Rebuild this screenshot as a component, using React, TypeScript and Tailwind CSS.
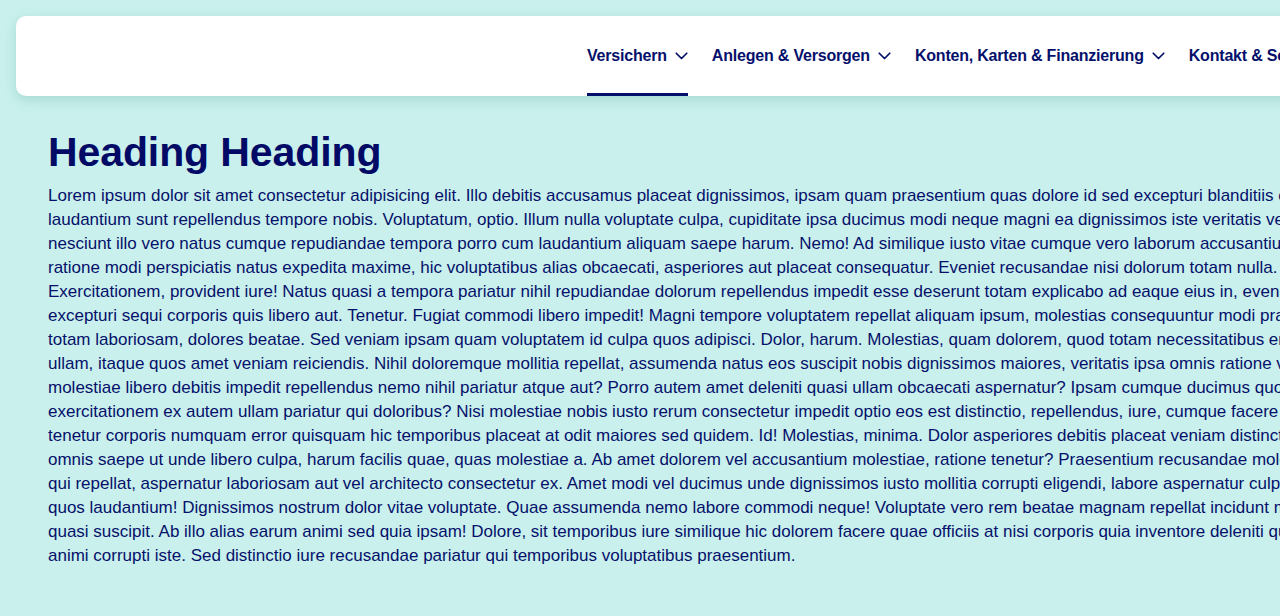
const navItems = [
  { label: 'Versichern', chevron: true, active: true },
  { label: 'Anlegen & Versorgen', chevron: true },
  { label: 'Konten, Karten & Finanzierung', chevron: true },
  { label: 'Kontakt & Service', chevron: true },
]

const lines = [
  'Lorem ipsum dolor sit amet consectetur adipisicing elit. Illo debitis accusamus placeat dignissimos, ipsam quam praesentium quas dolore id sed excepturi blanditiis cum',
  'laudantium sunt repellendus tempore nobis. Voluptatum, optio. Illum nulla voluptate culpa, cupiditate ipsa ducimus modi neque magni ea dignissimos iste veritatis vel',
  'nesciunt illo vero natus cumque repudiandae tempora porro cum laudantium aliquam saepe harum. Nemo! Ad similique iusto vitae cumque vero laborum accusantium',
  'ratione modi perspiciatis natus expedita maxime, hic voluptatibus alias obcaecati, asperiores aut placeat consequatur. Eveniet recusandae nisi dolorum totam nulla. Quo',
  'Exercitationem, provident iure! Natus quasi a tempora pariatur nihil repudiandae dolorum repellendus impedit esse deserunt totam explicabo ad eaque eius in, eveniet',
  'excepturi sequi corporis quis libero aut. Tenetur. Fugiat commodi libero impedit! Magni tempore voluptatem repellat aliquam ipsum, molestias consequuntur modi praesentium',
  'totam laboriosam, dolores beatae. Sed veniam ipsam quam voluptatem id culpa quos adipisci. Dolor, harum. Molestias, quam dolorem, quod totam necessitatibus enim',
  'ullam, itaque quos amet veniam reiciendis. Nihil doloremque mollitia repellat, assumenda natus eos suscipit nobis dignissimos maiores, veritatis ipsa omnis ratione vero',
  'molestiae libero debitis impedit repellendus nemo nihil pariatur atque aut? Porro autem amet deleniti quasi ullam obcaecati aspernatur? Ipsam cumque ducimus quod',
  'exercitationem ex autem ullam pariatur qui doloribus? Nisi molestiae nobis iusto rerum consectetur impedit optio eos est distinctio, repellendus, iure, cumque facere sint',
  'tenetur corporis numquam error quisquam hic temporibus placeat at odit maiores sed quidem. Id! Molestias, minima. Dolor asperiores debitis placeat veniam distinctio',
  'omnis saepe ut unde libero culpa, harum facilis quae, quas molestiae a. Ab amet dolorem vel accusantium molestiae, ratione tenetur? Praesentium recusandae molestias',
  'qui repellat, aspernatur laboriosam aut vel architecto consectetur ex. Amet modi vel ducimus unde dignissimos iusto mollitia corrupti eligendi, labore aspernatur culpa',
  'quos laudantium! Dignissimos nostrum dolor vitae voluptate. Quae assumenda nemo labore commodi neque! Voluptate vero rem beatae magnam repellat incidunt magni',
  'quasi suscipit. Ab illo alias earum animi sed quia ipsam! Dolore, sit temporibus iure similique hic dolorem facere quae officiis at nisi corporis quia inventore deleniti quod',
  'animi corrupti iste. Sed distinctio iure recusandae pariatur qui temporibus voluptatibus praesentium.',
]

function Chevron() {
  return (
    <svg width="13" height="8" viewBox="0 0 13 8" fill="none" className="shrink-0">
      <path d="M1.25 1.25 6.5 6.5l5.25-5.25" stroke="currentColor" strokeWidth="1.75" strokeLinecap="round" strokeLinejoin="round" />
    </svg>
  )
}

export default function App() {
  return (
    <div className="w-[1280px] h-[616px] overflow-hidden bg-[#c9f0ec] text-[#05106b] font-['Liberation_Sans',Arial,sans-serif]">
      <header className="ml-4 mt-4 w-[1500px] h-20 bg-white rounded-l-[10px] shadow-[0_4px_12px_rgba(60,150,140,0.25)] flex items-stretch">
        <nav className="ml-[571px] flex items-stretch gap-6">
          {navItems.map((item) => (
            <a
              key={item.label}
              href="#"
              className={`flex items-center gap-2 text-[16px] font-bold tracking-[-0.2px] border-b-[3px] pt-[3px] ${
                item.active ? 'border-[#05106b]' : 'border-transparent'
              }`}
            >
              <span>{item.label}</span>
              {item.chevron && <Chevron />}
            </a>
          ))}
        </nav>
      </header>

      <main className="px-12 pt-[32px]">
        <h1 className="text-[41px] leading-[48px] font-bold tracking-[-0.1px] text-[#020a66]">Heading Heading</h1>
        <div className="mt-[8px] w-[1500px] text-[17px] leading-6 whitespace-nowrap">
          {lines.map((line, i) => (
            <div key={i}>{line}</div>
          ))}
        </div>
      </main>
    </div>
  )
}
